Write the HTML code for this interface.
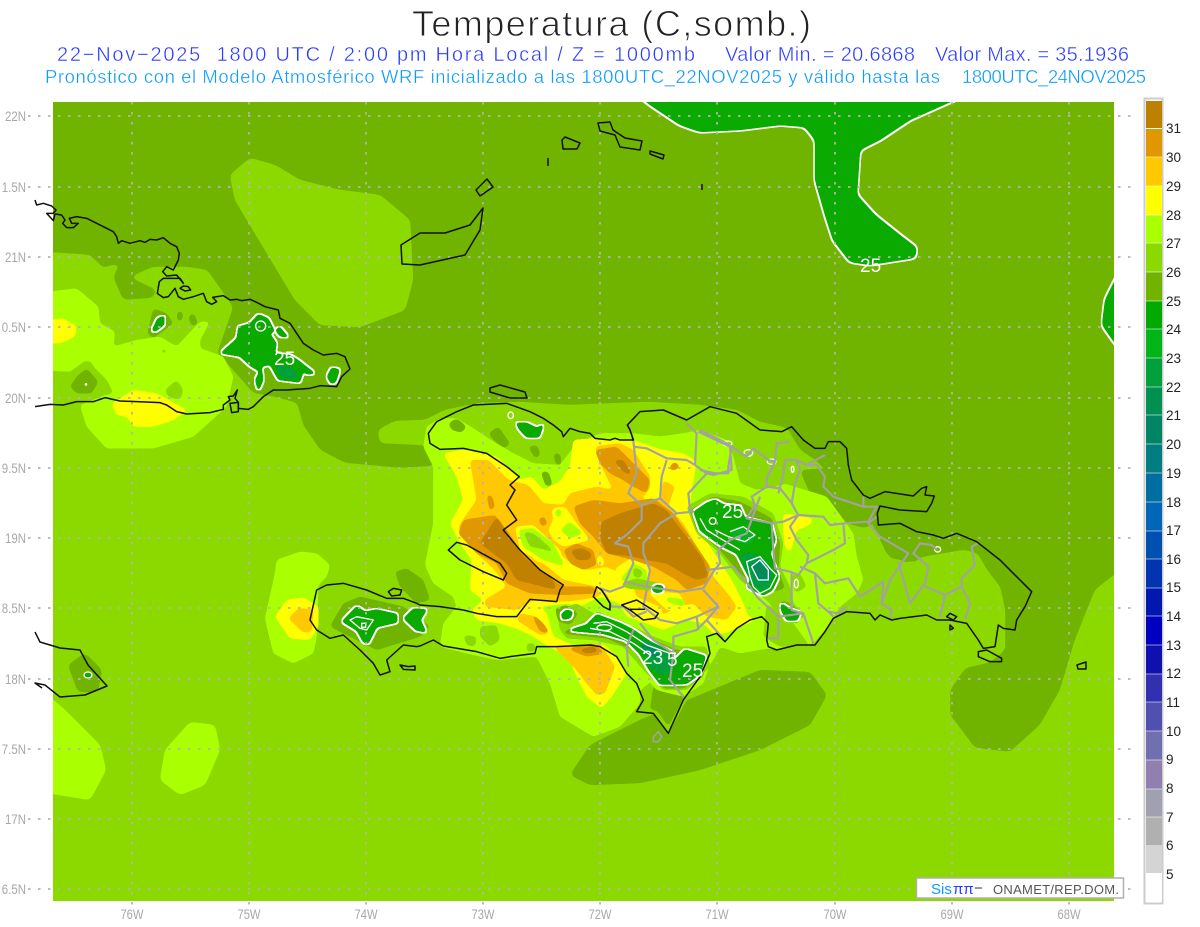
<!DOCTYPE html>
<html><head><meta charset="utf-8"><title>Temperatura</title>
<style>
html,body{margin:0;padding:0;background:#fff;width:1200px;height:927px;overflow:hidden}
svg{display:block}
.ol{fill:#70b400}.l1{fill:#8cd900}.l2{fill:#aaff00}.y{fill:#ffff00}.o{fill:#ffc800}.d{fill:#e19800}.b{fill:#c08000}
.gr polygon{filter:url(#gooR)}
.zz polygon.ol,.zz polygon.l1,.zz polygon.l2,.zz polygon.y,.zz polygon.o,.zz polygon.d,.zz polygon.b,.zz polygon.g0,.zz polygon.g1,.zz polygon.g2{filter:url(#gooZ)}
.g{fill:#000;filter:url(#gg)}
.g0{fill:#00b41a}.g1{fill:#00a03c}.g2{fill:#008c5a}
.r{fill:none;stroke:#fff;stroke-width:4;stroke-linejoin:round}
.c{fill:none;stroke:#111;stroke-width:4.5;stroke-linejoin:round}
.p{fill:none;stroke:#a2a2a2;stroke-width:6.5;stroke-linejoin:round}
text{font-family:"Liberation Sans",sans-serif;white-space:pre}
.lab{fill:#a8a8a8;font-size:13.5px}
.cb{fill:#222;font-size:13.5px}
.wt{fill:#fff;font-size:19px}
</style></head><body>
<svg width="1200" height="927" viewBox="0 0 1200 927" xmlns="http://www.w3.org/2000/svg">
<defs>
<filter id="gooR" primitiveUnits="userSpaceOnUse" color-interpolation-filters="sRGB"><feGaussianBlur stdDeviation="3"/><feColorMatrix values="1 0 0 0 0 0 1 0 0 0 0 0 1 0 0 0 0 0 18 -8"/></filter>
<filter id="gooZ" primitiveUnits="userSpaceOnUse" color-interpolation-filters="sRGB"><feGaussianBlur stdDeviation="6"/><feColorMatrix values="1 0 0 0 0 0 1 0 0 0 0 0 1 0 0 0 0 0 18 -8"/></filter>
<filter id="gg" primitiveUnits="userSpaceOnUse" color-interpolation-filters="sRGB" x="-25%" y="-25%" width="150%" height="150%">
<feGaussianBlur in="SourceAlpha" stdDeviation="5"/><feColorMatrix values="0 0 0 0 0 0 0 0 0 0 0 0 0 0 0 0 0 0 18 -8" result="s"/>
<feMorphology in="s" operator="dilate" radius="4" result="dl"/>
<feFlood flood-color="#fff"/><feComposite in2="dl" operator="in" result="w"/>
<feFlood flood-color="#0aaa00"/><feComposite in2="s" operator="in" result="gf"/>
<feMerge><feMergeNode in="w"/><feMergeNode in="gf"/></feMerge></filter>
<filter id="gg2" primitiveUnits="userSpaceOnUse" color-interpolation-filters="sRGB" x="-10%" y="-10%" width="120%" height="120%">
<feGaussianBlur in="SourceAlpha" stdDeviation="3"/><feColorMatrix values="0 0 0 0 0 0 0 0 0 0 0 0 0 0 0 0 0 0 18 -8" result="s"/>
<feMorphology in="s" operator="dilate" radius="1.4" result="dl"/>
<feFlood flood-color="#fff"/><feComposite in2="dl" operator="in" result="w"/>
<feFlood flood-color="#0aaa00"/><feComposite in2="s" operator="in" result="gf"/>
<feMerge><feMergeNode in="w"/><feMergeNode in="gf"/></feMerge></filter>
</defs>
<rect width="1200" height="927" fill="#fff"/>
<text x="412" y="36" font-size="36" fill="#222" stroke="#fff" stroke-width=".9" textLength="399" lengthAdjust="spacing">Temperatura (C,somb.)</text>
<g font-size="20" fill="#2a3cff" stroke="#fff" stroke-width=".4">
<text x="57" y="61" textLength="638" lengthAdjust="spacing">22−Nov−2025  1800 UTC / 2:00 pm Hora Local / Z = 1000mb</text>
<text x="725" y="61" textLength="190" lengthAdjust="spacing">Valor Min. = 20.6868</text>
<text x="935" y="61" textLength="194" lengthAdjust="spacing">Valor Max. = 35.1936</text>
</g>
<g font-size="18.5" fill="#0a9bff" stroke="#fff" stroke-width=".35">
<text x="45" y="83" textLength="895" lengthAdjust="spacing">Pronóstico con el Modelo Atmosférico WRF inicializado a las 1800UTC_22NOV2025 y válido hasta las</text>
<text x="962" y="83" textLength="184" lengthAdjust="spacing">1800UTC_24NOV2025</text>
</g>

<svg x="53" y="102" width="1061" height="799" viewBox="53 102 1061 799" overflow="hidden">
<rect x="53" y="102" width="1061" height="799" class="ol"/>
<g class="gr">
<polygon class="l1" points="30,251 90,255 103,268 120,263 113,277 123,300 153,298 157,290 130,277 153,267 187,267 207,270 233,307 217,353 233,370 253,393 275,397 297,403 303,425 320,450 345,463 400,468 435,466 425,445 380,443 378,430 395,421 425,420 445,410 480,403 520,402 570,405 620,403 650,402 700,405 737,410 760,422 787,428 800,450 815,460 825,470 822,487 860,502 870,520 880,540 887,555 907,563 923,557 963,550 977,553 987,570 1000,587 1005,610 1005,650 990,662 965,668 950,690 950,715 975,748 1010,752 1040,725 1060,690 1075,640 1095,590 1114,575 1140,560 1140,930 30,930"/>
<polygon class="l1" points="230,175 250,158 275,165 300,180 340,190 380,195 410,220 413,280 405,310 360,327 320,325 295,300 265,250 235,200"/>
<polygon class="ol" points="570,775 590,745 640,720 700,695 760,670 810,672 827,695 810,725 760,750 700,770 640,783 590,785"/>
<polygon class="ol" points="800,470 835,468 870,500 880,520 865,528 835,520 815,505"/>
<polygon class="ol" points="880,535 915,525 935,545 915,562 890,558"/>
<polygon class="l2" points="30,680 65,710 85,730 100,745 106,770 90,800 30,790"/>
<polygon class="l2" points="160,780 165,750 190,722 215,725 220,750 205,785 180,795"/>
</g>

<!-- West Cuba -->
<g class="zz" transform="translate(20,190) scale(.33333)">
<polygon class="l2" points="50,310 170,295 235,350 240,400 285,425 280,470 350,450 420,440 470,470 540,395 570,395 540,450 540,475 610,500 640,560 620,650 520,740 400,775 260,775 200,710 180,645 270,610 240,560 210,510 150,545 50,540"/>
<polygon class="y" points="50,395 130,385 170,410 165,440 120,460 50,458"/>
<polygon class="y" points="275,640 340,600 410,610 500,660 520,650 460,690 400,710 340,710 320,680 290,675"/>
<polygon class="l1" points="435,600 470,570 490,600 480,630 445,620"/>
<polygon class="l1" points="420,475 445,480 430,495"/>
<polygon class="l1" points="565,550 590,545 585,558"/>
<polygon class="l1" points="130,560 200,510 260,570 280,610 180,630 110,620"/>
<polygon class="ol" points="150,590 170,560 200,535 235,575 215,610 170,610"/>
<polygon class="ol" points="382,430 400,355 440,370 460,400 420,430 400,445"/>
<polygon class="ol" points="470,365 490,365 485,395 472,392"/>
<polygon class="ol" points="505,380 520,368 535,400 515,410"/>
<circle cx="198" cy="583" r="4" fill="#fff"/>
<polygon class="g" points="395,422 412,385 434,376 433,405 405,426"/>
<polygon class="g" points="600,490 650,445 655,410 690,400 715,372 745,385 765,425 750,430 770,460 765,490 810,495 835,510 888,552 860,553 850,545 840,578 775,570 750,525 725,530 730,570 715,606 705,570 718,545 690,528 660,500"/>
<polygon class="g1" points="770,525 800,530 840,550 820,570 780,560"/>
<ellipse cx="722" cy="408" rx="15" ry="15" class="r"/>
<polygon class="g" points="765,420 780,410 797,432 812,442 780,440"/>
<polygon class="g" points="920,560 935,532 960,538 947,578 933,582"/>
</g>

<!-- Tiburon west -->
<g class="zz" transform="translate(260,540) scale(.33333)">
<polygon class="l2" points="15,235 45,100 50,60 120,35 170,40 210,75 200,110 175,135 170,290 160,340 100,370 40,340"/>
<polygon class="y" points="45,230 80,180 130,172 175,200 175,260 150,300 90,295"/>
<polygon class="o" points="85,235 115,205 160,208 155,275 130,278"/>
<polygon class="ol" points="405,95 440,85 490,120 510,180 470,190 420,140"/>
<polygon class="ol" points="210,260 250,190 300,170 430,200 510,260 480,290 350,330 270,290"/>
<polygon class="g" points="245,245 290,198 315,215 350,208 412,222 412,248 350,262 325,312 310,308 290,272"/>
<polygon class="g" points="430,235 460,205 502,208 482,240 500,278 468,272"/>
<polygon class="r" points="270,240 290,230 340,240 320,270 300,265"/>
<rect x="305" y="250" width="12" height="12" class="r"/>
</g>

<!-- Hispaniola layers: z5 coords (east = z6 x+840) -->
<g class="zz" transform="translate(420,390) scale(.33333)">
<polygon class="l2" points="20,110 60,85 110,85 160,115 220,155 280,190 340,220 420,225 470,160 540,130 640,130 720,140 790,130 840,120 920,150 940,200 960,280 1010,300 1090,280 1220,320 1300,430 1310,500 1330,570 1310,610 1260,650 1230,700 1180,760 1130,765 1080,780 1040,775 960,790 900,770 880,810 840,860 700,870 660,900 660,940 600,1010 520,1040 420,980 390,880 350,800 230,810 140,790 60,770 70,700 110,650 100,620 40,580 15,525 40,400 40,230 10,170"/>
<polygon class="ol" points="85,100 110,85 140,110 125,128 95,120"/>
<polygon class="ol" points="205,130 235,110 270,160 255,175 225,155"/>
<polygon class="ol" points="325,170 350,165 362,195 345,205"/>
<polygon class="ol" points="400,190 420,190 425,225 408,225"/>
<polygon class="ol" points="362,245 385,245 398,285 378,290"/>
<polygon class="l1" points="1040,640 1120,700 1170,770 1080,770 1030,740"/>
<polygon class="l1" points="180,710 230,705 240,750 210,770 180,740"/>
<polygon class="l1" points="130,735 170,740 165,770 140,765"/>
<polygon class="l1" points="320,760 345,760 345,785 320,785"/>
<polygon class="l1" points="700,880 760,860 840,860 800,930 745,1030 700,970 650,965 670,930"/>
<polygon class="ol" points="700,890 780,885 790,925 745,1010 710,960 690,960"/>
<polygon class="l1" points="1000,240 1060,240 1120,260 1180,290 1100,280 1020,300"/>
<polygon class="y" points="70,190 130,178 230,200 275,245 300,270 335,260 370,300 420,275 450,230 460,150 520,145 640,150 680,165 730,180 790,190 830,215 815,300 810,345 830,410 870,470 905,525 935,570 970,640 985,680 1010,690 960,710 915,730 880,730 850,700 800,690 730,720 680,700 620,680 600,640 540,620 480,650 440,640 360,650 380,670 400,740 470,770 550,760 590,800 620,850 575,920 545,955 500,920 470,860 445,800 385,770 340,740 300,720 240,700 170,690 155,660 190,630 150,600 155,510 120,460 90,400 130,330 110,260"/>
<polygon class="y" points="1090,370 1180,385 1170,405 1130,420 1110,490 1095,470 1090,420"/>
<polygon class="o" points="150,210 205,210 265,270 325,285 370,340 430,345 450,310 530,290 580,300 540,220 525,170 600,160 640,180 690,260 690,295 660,330 720,325 725,300 730,270 765,290 750,330 745,350 790,400 830,470 870,530 880,560 930,620 950,650 920,690 860,680 820,640 770,650 720,680 730,655 650,620 640,590 620,560 560,530 500,540 440,510 420,490 380,470 300,420 340,510 370,520 430,570 530,590 540,620 440,635 340,630 290,660 195,650 195,630 260,590 225,540 170,490 130,440 115,410 170,330"/>
<polygon class="o" points="300,670 350,680 390,730 360,735 320,710 290,690"/>
<polygon class="o" points="400,770 480,765 540,760 585,830 570,870 555,910 530,915 500,880 470,840"/>
<polygon class="y" points="395,355 435,350 470,400 510,450 430,470 400,450 385,420 400,390"/>
<polygon class="y" points="285,410 340,405 420,480 440,540 370,520 300,480"/>
<polygon class="l2" points="295,420 340,415 400,460 435,530 370,510 310,470"/>
<polygon class="l1" points="310,425 340,430 410,490 360,475 330,470"/>
<polygon class="l2" points="420,420 450,395 490,430 450,445"/>
<polygon class="l2" points="405,365 420,350 425,375 410,385"/>
<polygon class="y" points="530,500 545,495 555,525 535,530"/>
<polygon class="y" points="580,540 640,500 690,530 680,590 620,570"/>
<polygon class="l2" points="600,570 640,520 680,540 680,590 640,580"/>
<polygon class="l1" points="640,530 670,545 660,565 640,560"/>
<polygon class="l1" points="600,580 650,565 720,580 730,605 680,600 620,595"/>
<polygon class="y" points="680,605 780,610 800,660 740,660 720,640"/>
<polygon class="l2" points="730,620 800,630 790,650 750,640"/>
<polygon class="d" points="460,350 520,330 600,340 700,325 760,370 830,470 870,530 860,580 800,600 770,570 700,530 640,510 560,490 520,440 480,400"/>
<polygon class="d" points="430,480 470,460 520,480 530,525 490,540 450,520"/>
<polygon class="d" points="115,430 130,390 225,375 260,420 300,480 350,540 430,590 520,590 530,610 430,615 330,610 260,580 230,520 170,490"/>
<polygon class="d" points="525,180 590,170 640,220 690,270 680,310 640,290 610,270 570,250 540,220"/>
<polygon class="d" points="440,775 520,760 555,790 500,800"/>
<polygon class="d" points="330,665 370,700 390,730 360,725"/>
<polygon class="d" points="200,315 215,315 225,350 210,365"/>
<polygon class="d" points="760,215 780,225 770,240 745,240"/>
<polygon class="b" points="545,395 600,370 650,355 700,340 740,360 760,390 800,440 850,510 865,560 830,570 790,550 740,520 680,510 640,500 560,490 540,440"/>
<polygon class="b" points="450,480 490,475 515,490 510,510 470,510"/>
<polygon class="b" points="180,460 230,380 260,430 310,500 400,570 410,600 290,570 260,520 220,490"/>
<polygon class="b" points="580,210 610,210 640,260 610,245"/>
<polygon class="b" points="470,780 520,770 540,785 500,790"/>
<polygon class="d" points="355,385 375,380 382,405 365,410"/>
<polygon class="l2" points="400,690 520,650 640,690 800,760 880,790 850,880 790,920 710,900 650,830 590,770 440,750"/>
<polygon class="l1" points="410,660 470,640 520,670 640,710 700,740 780,770 860,770 870,830 800,900 730,900 670,840 610,770 520,750 440,745 420,720"/>
<polygon class="ol" points="405,655 440,645 475,670 450,705 415,695"/>
<polygon class="ol" points="420,730 500,695 530,665 610,695 700,750 770,780 860,790 850,860 790,895 730,895 680,840 640,780 560,745"/>
<polygon class="l1" points="800,350 870,310 970,320 1060,370 1090,460 1080,530 1110,590 1120,640 1160,680 1100,700 1040,630 960,570 900,490 830,430"/>
<polygon class="ol" points="810,360 880,320 960,335 1055,385 1080,460 1075,540 1095,595 1040,610 960,550 900,480 830,420"/>
<polygon class="ol" points="1080,630 1110,640 1145,670 1135,700 1095,695"/>
<polygon class="l1" points="1115,555 1140,550 1160,590 1125,610"/>
<polygon class="g" points="422,672 440,658 460,665 452,685 428,690"/>
<polygon class="g" points="287,98 320,98 350,113 372,102 358,143 320,143 298,120"/>
<ellipse cx="272" cy="76" rx="8" ry="10" class="r"/>
<polygon class="g" points="440,722 500,703 530,672 600,698 640,718 690,753 760,788 762,812 795,778 858,798 842,852 800,882 760,884 720,884 688,842 658,792 618,752 550,732"/>
<polygon class="g1" points="660,745 720,770 745,790 760,830 730,860 690,830"/>
<polygon class="g2" points="655,755 710,778 725,805 680,795"/>
<polyline class="r" points="520,700 560,695 620,725 680,765 750,790"/>
<polyline class="r" points="510,715 570,725 640,760 690,795"/>
<ellipse cx="553" cy="713" rx="22" ry="9" class="r"/>
<polygon class="g" points="693,597 710,583 732,588 727,607 705,609"/>
<polygon class="g" points="820,365 860,338 885,328 910,343 960,348 975,383 1055,403 1067,450 1052,490 1067,535 1077,560 1057,602 1030,617 1000,602 980,592 990,570 970,532 950,492 910,472 880,452 840,422"/>
<polygon class="g0" points="960,405 1005,435 990,465 950,455 930,430"/>
<polygon class="g1" points="960,490 1000,490 1040,510 1060,560 1040,605 1000,590 985,560"/>
<polygon class="r" points="980,515 1020,500 1050,535 1070,555 1050,595 1020,610 1000,590 990,560"/>
<polygon class="g2" points="990,525 1022,505 1050,540 1050,575 1012,575"/>
<polygon class="r" points="995,530 1020,510 1045,540 1045,570 1015,570"/>
<circle cx="878" cy="393" r="10" class="r"/>
<polyline class="r" points="885,420 925,440 975,455 1005,435 970,410 930,425"/>
<polyline class="r" points="840,385 860,420 900,445 960,480"/>
<ellipse cx="1129" cy="581" rx="6" ry="13" class="r"/>
<polygon class="g" points="1082,638 1110,657 1142,668 1132,692 1100,692 1083,662"/>
<ellipse cx="922" cy="160" rx="14" ry="7" class="r"/>
<ellipse cx="985" cy="189" rx="13" ry="10" class="r"/>
<ellipse cx="1055" cy="215" rx="13" ry="8" class="r"/>
<ellipse cx="1118" cy="238" rx="4" ry="9" class="r"/>
<ellipse cx="1553" cy="478" rx="9" ry="8" class="r" fill="none"/>
</g>

<!-- Jamaica blob -->
<polygon class="ol" points="68,665 85,653 102,670 98,692 78,692" style="filter:url(#gooR)"/>
<ellipse cx="88" cy="675" rx="4" ry="3" fill="#0aaa00" stroke="#fff" stroke-width="1.3"/>

<!-- Top green -->
<polygon points="625,85 650,105 665,115 680,125 700,132 740,130 780,125 805,127 815,140 815,180 825,215 833,240 850,262 870,265 915,258 917,248 900,235 875,215 857,195 860,150 880,140 910,120 955,100 990,85" style="filter:url(#gg2)"/>
<polygon points="1135,245 1114,282 1105,300 1102,325 1114,342 1135,365" style="filter:url(#gg2)"/>
</svg>

<!-- grid -->
<g stroke="#b4b4b0" stroke-width="1.8" stroke-dasharray="2.5 7.5" fill="none">
<path d="M28 116H1135M28 187H1135M28 257H1135M28 327H1135M28 398H1135M28 468H1135M28 538H1135M28 608H1135M28 679H1135M28 749H1135M28 819H1135M28 889H1135"/>
<path d="M132 102V906M249 102V906M366 102V906M483 102V906M600 102V906M717 102V906M835 102V906M952 102V906M1069 102V906"/>
</g>

<!-- province lines -->
<g transform="translate(420,390) scale(.33333)">
<polyline class="p" points="625,100 640,150 650,250 625,310 665,345 665,390 625,430 585,460 625,470 640,520 610,590 570,605 540,595 560,620 575,650 610,650 640,680 680,665"/>
<polyline class="p" points="640,170 680,175 740,205 800,210 825,225 830,130 800,100"/>
<polyline class="p" points="835,125 930,170 935,240 880,255 860,250"/>
<polyline class="p" points="825,225 860,250 805,310 810,360 820,365 770,370 720,325 665,345"/>
<polyline class="p" points="740,210 725,260 720,325"/>
<polyline class="p" points="770,370 720,400 670,460 670,490 690,540 680,590 615,575"/>
<polyline class="p" points="680,590 780,605 850,595 880,545 900,520 895,480 930,450 980,430 1020,320"/>
<polyline class="p" points="850,600 895,650 860,690 830,720 760,740 760,790 750,870 790,920"/>
<polyline class="p" points="680,600 670,650 720,690 770,700 830,680 895,650"/>
<polyline class="p" points="640,720 620,770 625,830"/>
<polyline class="p" points="835,720 830,680"/>
<polyline class="p" points="660,700 700,750 760,790"/>
<polyline class="p" points="860,690 905,740 910,750"/>
<polygon class="p" style="stroke-width:5" points="700,1040 715,1025 725,1040 715,1055 700,1055"/>
<g transform="translate(840,0)">
<polyline class="p" points="0,120 70,155 95,170 85,230 85,250 45,250 0,240"/>
<polyline class="p" points="95,170 140,200 160,175 205,210 225,215 230,160 270,155"/>
<polyline class="p" points="225,215 200,265 200,290 155,320 165,345 140,385 215,400 250,395 295,375 370,380 390,405 435,400 505,395 530,350 490,350 400,320 370,290 375,260 350,225 320,225 290,210 255,210 250,255 235,310"/>
<polyline class="p" points="290,210 300,240 285,280 275,340 295,375"/>
<polyline class="p" points="200,290 240,295 280,345"/>
<polyline class="p" points="320,225 375,195"/>
<polyline class="p" points="490,320 490,350"/>
<polyline class="p" points="295,375 270,410 290,450 325,495 320,520 400,480 435,460 430,400"/>
<polyline class="p" points="320,520 295,555 270,545 225,535 220,480 215,400"/>
<polyline class="p" points="300,530 345,550 375,580 445,565 480,620 550,575 545,640 575,660 570,690"/>
<polyline class="p" points="345,550 355,640 385,665 415,670 440,650"/>
<polyline class="p" points="530,380 505,400 540,440 625,490 570,570 545,640"/>
<polyline class="p" points="595,515 630,640 675,580 685,530 640,490 660,460 695,465 710,480"/>
<polyline class="p" points="675,590 735,615 720,680"/>
<polyline class="p" points="735,615 785,590 810,640 795,690"/>
<polyline class="p" points="785,590 785,565 825,525 815,470 835,460"/>
<polyline class="p" points="170,620 235,680 235,745 205,745"/>
<polyline class="p" points="235,680 310,670 340,760"/>
<polyline class="p" points="170,620 150,590 100,530 20,540"/>
<polyline class="p" points="275,550 275,660 310,670"/>
<polyline class="p" points="400,680 385,665"/>
</g>
</g>

<!-- coast Cuba north -->
<g transform="translate(20,190) scale(.33333)">
<polyline class="c" points="45,30 50,45 70,40 95,48 108,60 100,70 80,70 100,92 105,72 125,75 135,90 128,100 140,113 160,113 175,100 155,100 148,85 170,80 200,85 230,100 280,125 290,140 295,160 305,152 330,160 360,152 375,157 390,148 410,150 430,143 450,160 470,170 478,190 475,210 460,240 440,230 428,245 440,258 470,255 490,280 480,265 430,265 418,275 412,310 430,323 445,320 465,295 475,320 490,328 520,320 550,310 560,335 575,343 590,335 578,322 610,317 630,330 650,328 665,332 690,328 710,337 735,350 775,360 780,385 810,400 830,430 850,460 880,480 910,495 950,490 975,500 990,537 965,560 950,590 900,587 870,595 800,600 760,600 730,620 700,650 685,658 655,655 655,637 645,625 652,600 640,618 625,620 630,630 610,645 610,658 570,668 500,672 470,665 440,645 420,638 350,635 300,633 255,623 220,635 170,635 130,645 90,643 45,650"/>
<polygon class="c" points="480,295 490,288 505,290 512,300 495,303"/>
<polygon class="c" points="630,640 655,637 655,665 635,668"/>
</g>
<g fill="none" stroke="#111" stroke-width="1.5" stroke-linejoin="round">
<polygon points="402,264 401,245 420,233 445,233 470,225 483,208 480,230 465,255 420,265"/>
<polygon points="476,190 487,179 493,187 480,196"/>
<polygon points="562,140 565,137 580,143 577,149 563,149"/>
<polygon points="598,123 610,122 613,130 625,138 642,141 640,150 620,147 615,135 600,131"/>
<polygon points="650,151 664,155 663,159 650,154"/>
<path d="M548 158V166M702 184V190"/>
<polygon points="490,388 500,385 525,392 527,398 510,398 490,392"/>
<polyline points="35,632 40,642 60,648 80,650 88,665 107,686 85,695 60,697 45,685 35,683 42,688"/>
<polygon points="1077,665 1086,662 1086,669 1078,669"/>
</g>

<!-- Hispaniola coast -->
<g transform="translate(420,390) scale(.33333)">
<polyline class="c" points="50,95 110,65 160,45 260,40 330,65 370,85 400,105 425,125 430,140 450,115 480,125 510,130 525,145 570,150 585,145 600,150 640,150 630,120 622,105 660,65 730,60 800,90 870,50 950,70 1020,120"/>
<polyline class="c" points="1020,120 1085,125 1115,110 1150,150 1185,175 1215,175 1225,155 1260,155 1280,175 1285,225 1295,270 1330,315 1350,325 1395,305 1480,318 1505,295 1520,290 1515,315 1543,318 1535,340 1520,365 1440,360 1380,348 1372,370 1375,405 1440,400 1490,425 1540,435 1570,445 1610,430 1670,455 1740,510 1800,570 1835,605 1815,650 1790,690 1785,720 1750,715 1735,705 1725,770 1690,775 1675,750 1640,700 1590,690 1550,690 1520,675 1440,685 1415,690 1380,675 1365,690 1350,670 1280,665 1240,685 1215,725 1185,765 1130,765 1070,780 1045,770 1040,750 1045,700 1025,680 990,690 950,715 915,755 890,730 860,740 870,790 840,860 790,930 745,1030 700,970 650,965 670,930 650,880 620,850 590,800 540,770 510,765 410,770 350,770 345,790 270,800 240,805 170,785 70,768 40,750 0,768 -10,770 -50,765 -100,810 -90,845 -120,855 -140,820 -180,780 -230,735 -270,745 -310,720 -330,690 -310,600 -280,585 -230,580 -160,600 -100,625 -50,625 -10,640 0,645 60,650 130,660 170,670 230,680 290,680 330,628 410,635 420,600 430,585 360,540 300,480 250,420 290,390 260,345 285,300 270,285 298,260 260,230 200,190 130,175 60,178 30,160 25,130 50,95"/>
<polygon class="c" points="85,480 110,457 140,465 240,520 260,550 250,570 190,545 120,510"/>
<polygon class="c" points="530,590 520,620 550,650 570,660 570,640 545,600"/>
<polygon class="c" points="605,645 650,630 715,670 705,685 670,690 630,660"/>
<path class="c" d="M630 658H675"/>
<polygon class="c" points="-95,605 -80,595 -55,600 -60,615 -85,618"/>
<polygon class="c" points="-60,825 -35,830 -15,828 -15,840 -50,838"/>
<polygon class="c" points="1675,785 1700,780 1745,805 1745,815 1710,815 1675,800"/>
<polygon class="c" points="1580,680 1590,670 1610,680 1600,690"/>
<polygon class="c" points="1590,705 1600,715 1590,720"/>
</g>

<!-- white numbers -->
<text class="wt" x="860" y="272">25</text>
<text class="wt" x="274" y="365">25</text>
<text class="wt" x="722" y="518">25</text>
<text class="wt" x="642" y="664">23</text>
<text class="wt" x="667" y="666">5</text>
<text class="wt" x="682" y="677">25</text>

<!-- axis labels -->
<g class="lab" transform="scale(.85,1)" text-anchor="end">
<text x="30.6" y="121">22N</text><text x="30.6" y="192">1.5N</text><text x="30.6" y="262">21N</text><text x="30.6" y="332">0.5N</text><text x="30.6" y="403">20N</text><text x="30.6" y="473">9.5N</text><text x="30.6" y="543">19N</text><text x="30.6" y="613">8.5N</text><text x="30.6" y="684">18N</text><text x="30.6" y="754">7.5N</text><text x="30.6" y="824">17N</text><text x="30.6" y="894">6.5N</text>
</g>
<g class="lab" text-anchor="middle" transform="scale(.83,1)">
<text x="159" y="919">76W</text><text x="300" y="919">75W</text><text x="441" y="919">74W</text><text x="581.9" y="919">73W</text><text x="722.9" y="919">72W</text><text x="863.9" y="919">71W</text><text x="1006" y="919">70W</text><text x="1147" y="919">69W</text><text x="1288" y="919">68W</text>
</g>

<!-- logo -->
<rect x="916.5" y="878" width="207" height="20" fill="#fff" stroke="#b0b0b0" stroke-width="1.5"/>
<text x="931" y="894" font-size="15" fill="#0a9bff">Sis</text>
<text x="953" y="894" font-size="15" fill="#2a3cff" font-family="'DejaVu Sans',sans-serif">ππ</text>
<text x="974" y="893" font-size="15" fill="#444">−</text>
<text x="993" y="894" font-size="13" fill="#555" textLength="126" lengthAdjust="spacing">ONAMET/REP.DOM.</text>

<!-- colorbar -->
<rect x="1144.5" y="98.5" width="18" height="805" fill="#fff" stroke="#ccc" stroke-width="2"/>
<g>
<rect x="1146" y="101" width="16" height="27" fill="#be8000"/>
<rect x="1146" y="129" width="16" height="28" fill="#e19800"/>
<rect x="1146" y="157" width="16" height="29" fill="#ffc800"/>
<rect x="1146" y="186" width="16" height="29" fill="#ffff00"/>
<rect x="1146" y="215" width="16" height="28" fill="#aaff00"/>
<rect x="1146" y="243" width="16" height="29" fill="#8cd900"/>
<rect x="1146" y="272" width="16" height="29" fill="#70b400"/>
<rect x="1146" y="301" width="16" height="28" fill="#00aa00"/>
<rect x="1146" y="329" width="16" height="29" fill="#00b41a"/>
<rect x="1146" y="358" width="16" height="29" fill="#00a03c"/>
<rect x="1146" y="387" width="16" height="28" fill="#009150"/>
<rect x="1146" y="415" width="16" height="29" fill="#008564"/>
<rect x="1146" y="444" width="16" height="29" fill="#007d80"/>
<rect x="1146" y="473" width="16" height="29" fill="#006e9e"/>
<rect x="1146" y="502" width="16" height="29" fill="#0066b8"/>
<rect x="1146" y="531" width="16" height="28" fill="#0050b0"/>
<rect x="1146" y="559" width="16" height="29" fill="#0034b0"/>
<rect x="1146" y="588" width="16" height="28" fill="#0018b0"/>
<rect x="1146" y="616" width="16" height="29" fill="#0000c0"/>
<rect x="1146" y="645" width="16" height="29" fill="#1010b0"/>
<rect x="1146" y="674" width="16" height="28" fill="#3030b0"/>
<rect x="1146" y="702" width="16" height="29" fill="#5050b0"/>
<rect x="1146" y="731" width="16" height="29" fill="#7070b0"/>
<rect x="1146" y="760" width="16" height="29" fill="#9080b0"/>
<rect x="1146" y="789" width="16" height="28" fill="#a0a0b0"/>
<rect x="1146" y="817" width="16" height="28" fill="#b0b0b0"/>
<rect x="1146" y="845" width="16" height="28" fill="#d4d4d4"/>
<rect x="1146" y="873" width="16" height="29" fill="#ffffff"/>
</g>
<g stroke="#fff" stroke-opacity=".55" stroke-width="1">
<path d="M1146 128.5H1162M1146 157H1162M1146 186H1162M1146 215H1162M1146 243H1162M1146 272H1162M1146 301H1162M1146 329H1162M1146 358H1162M1146 387H1162M1146 415H1162M1146 444H1162M1146 473H1162M1146 502H1162M1146 531H1162M1146 559H1162M1146 588H1162M1146 616H1162M1146 645H1162M1146 674H1162M1146 702H1162M1146 731H1162M1146 760H1162M1146 789H1162M1146 817H1162"/>
</g>
<g class="cb">
<text x="1166" y="133">31</text><text x="1166" y="162">30</text><text x="1166" y="191">29</text><text x="1166" y="220">28</text><text x="1166" y="248">27</text><text x="1166" y="277">26</text><text x="1166" y="306">25</text><text x="1166" y="334">24</text><text x="1166" y="363">23</text><text x="1166" y="392">22</text><text x="1166" y="420">21</text><text x="1166" y="449">20</text><text x="1166" y="478">19</text><text x="1166" y="507">18</text><text x="1166" y="535">17</text><text x="1166" y="564">16</text><text x="1166" y="592">15</text><text x="1166" y="621">14</text><text x="1166" y="650">13</text><text x="1166" y="678">12</text><text x="1166" y="707">11</text><text x="1166" y="736">10</text><text x="1166" y="764">9</text><text x="1166" y="793">8</text><text x="1166" y="822">7</text><text x="1166" y="850">6</text><text x="1166" y="879">5</text>
</g>
</svg>
</body></html>
